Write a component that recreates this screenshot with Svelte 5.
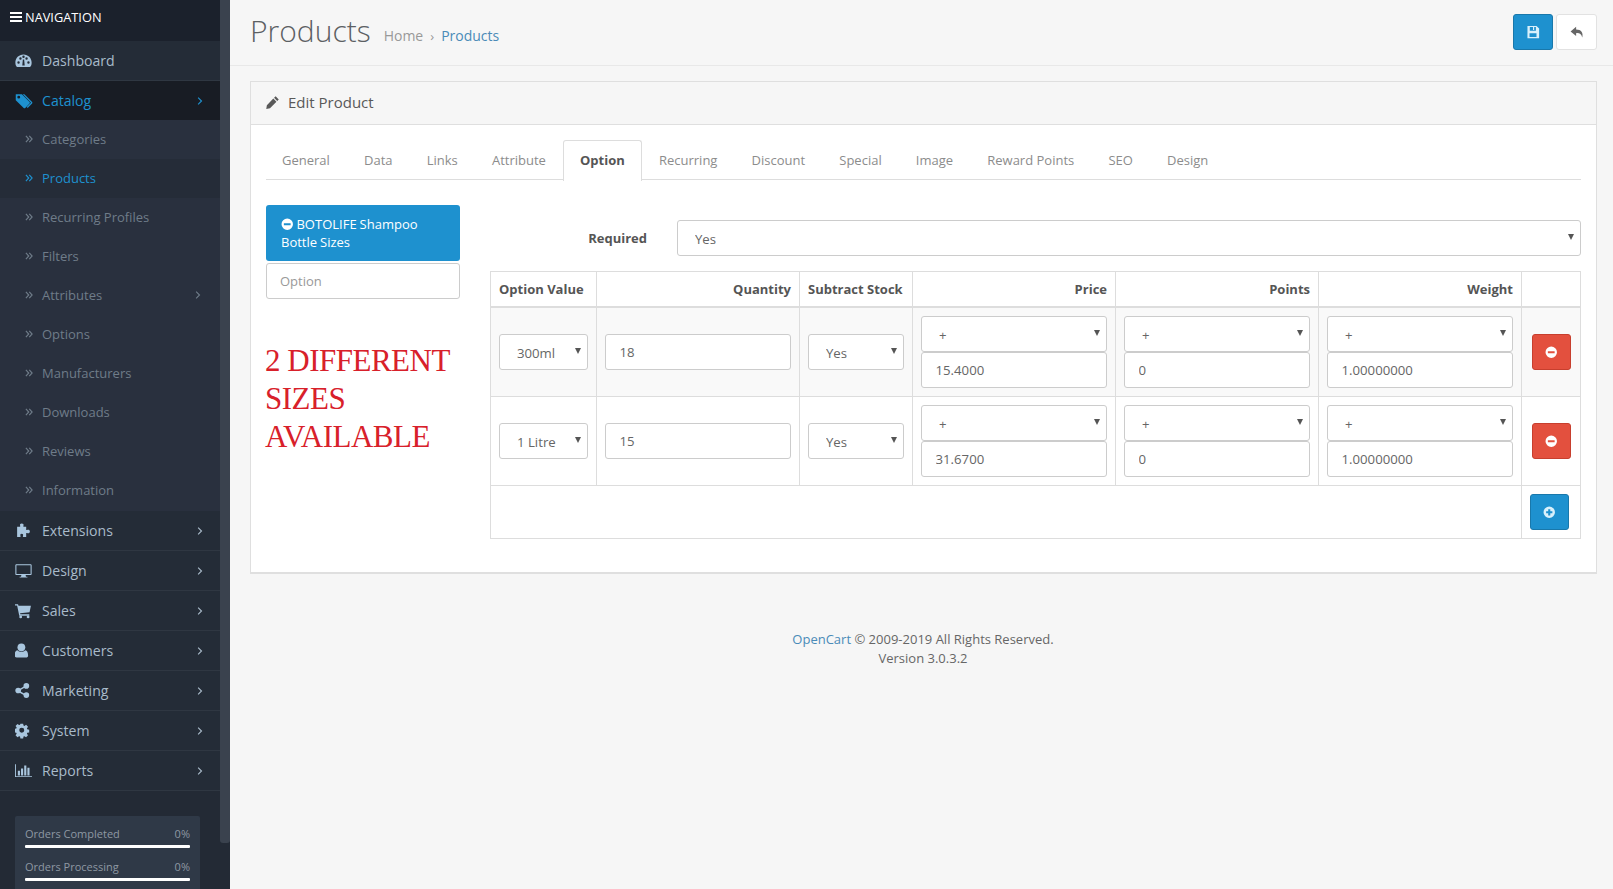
<script>
  const tabs = ['General','Data','Links','Attribute','Option','Recurring','Discount','Special','Image','Reward Points','SEO','Design'];
  const subs = [
    {t:'Categories'},{t:'Products',active:true},{t:'Recurring Profiles'},{t:'Filters'},{t:'Attributes',more:true},
    {t:'Options'},{t:'Manufacturers'},{t:'Downloads'},{t:'Reviews'},{t:'Information'}
  ];
  const mains = ['Extensions','Design','Sales','Customers','Marketing','System','Reports'];
  const rows = [
    {value:'300ml',qty:'18',price:'15.4000'},
    {value:'1 Litre',qty:'15',price:'31.6700'}
  ];
</script>

{#snippet icon(name)}
  <svg class="ic" viewBox="0 0 24 24" aria-hidden="true">
    {#if name==='Dashboard'}
      <path fill-rule="evenodd" d="M12 3.500C5.400 3.500 0.500 8.600 0.500 15c0 2.200.6 4 1.600 5.500.2.300.5.500.9.5h18c.4 0 .7-.2.9-.5 1-1.500 1.600-3.300 1.600-5.500C23.500 8.600 18.600 3.500 12 3.500zM5 16.500a1.700 1.700 0 1 1 0-3.400 1.700 1.700 0 0 1 0 3.400zm2.700-5.600a1.700 1.700 0 1 1 0-3.400 1.700 1.700 0 0 1 0 3.400zM12 8.300a1.700 1.700 0 1 1 0-3.400 1.700 1.700 0 0 1 0 3.400zm4.300 2.600a1.700 1.700 0 1 1 0-3.400 1.700 1.700 0 0 1 0 3.400zm2.700 5.600a1.700 1.700 0 1 1 0-3.400 1.700 1.700 0 0 1 0 3.400zM10.300 19l.8-8.500h1.800l.8 8.500z"/>
    {:else if name==='Catalog'}
      <path fill-rule="evenodd" d="M1 3h8.200l10.300 10.300c.6.600.6 1.500 0 2.100l-5.800 5.800c-.6.600-1.500.6-2.100 0L1 10.900zM5 8.800a1.900 1.900 0 1 0 0-3.800 1.900 1.900 0 0 0 0 3.800z"/>
      <path d="M12.500 3l10.300 10.300c.6.600.6 1.500 0 2.100l-5.900 5.900-1.300-1.300 5.700-5.700L10.300 3z"/>
    {:else if name==='Extensions'}
      <path d="M9.500 2c2 0 3 1.200 2.500 2.800-.3.900-.5 1.500.2 1.900H15.800v4.300c.4.700 1 .4 1.900.1 1.700-.5 3.300.4 3.300 2.400s-1.600 2.900-3.300 2.400c-.9-.3-1.500-.6-1.900.1V21H11.500c-.7-.4-.4-1-.1-1.900.5-1.600-.4-2.600-1.900-2.600s-2.400 1-1.900 2.600c.3.900.6 1.500-.1 1.900H3V6.700h4c.7-.4.500-1 .2-1.900C6.700 3.200 7.500 2 9.500 2z"/>
    {:else if name==='Design'}
      <path fill-rule="evenodd" d="M2 3h20c.8 0 1.500.7 1.500 1.500v12.500c0 .8-.7 1.500-1.500 1.500h-7l.5 2.200h2V22H6.500v-1.300h2L9 18.500H2c-.8 0-1.500-.7-1.500-1.500V4.500C.5 3.700 1.200 3 2 3zm0 1.600v12.300h20V4.600z"/>
    {:else if name==='Sales'}
      <path d="M0 3h4.300l.6 2.200H22.500l-2 9.300-13.300 1.500.3 1.300h12.700v2H6L3 5H0z"/><circle cx="8" cy="21" r="2"/><circle cx="18.500" cy="21" r="2"/>
    {:else if name==='Customers'}
      <circle cx="9" cy="7.500" r="5.500"/><path d="M3.500 11.500c1.300 1.400 3.300 2.300 5.500 2.300s4.200-.9 5.500-2.300c2.600.3 4 3 4 7.500 0 2-1.200 3-3 3H2.500c-1.800 0-3-1-3-3 0-4.500 1.400-7.200 4-7.500z"/>
    {:else if name==='Marketing'}
      <circle cx="4.500" cy="12" r="4"/><circle cx="16" cy="5.500" r="4"/><circle cx="16" cy="18.500" r="4"/><path d="M4.500 11l11-6.500 1 1.900-10.500 6 10.500 5.800-1 2-11.500-6.500z"/>
    {:else if name==='System'}
      <path fill-rule="evenodd" transform="translate(-1 1) scale(.88)" d="M9.800 1.500h4.400l.6 3.100 1.500.6 2.600-1.800 3.100 3.100-1.800 2.600.6 1.500 3.100.6v4.400l-3.100.6-.6 1.500 1.800 2.600-3.100 3.100-2.600-1.800-1.500.6-.6 3.100H9.800l-.6-3.100-1.500-.6-2.600 1.800-3.100-3.100 1.800-2.600-.6-1.500-3.100-.6V9.800l3.100-.6.6-1.500-1.800-2.600 3.100-3.100 2.600 1.800 1.500-.6zM12 8a4 4 0 1 0 0 8 4 4 0 0 0 0-8z"/>
    {:else if name==='Reports'}
      <path d="M0 3h1.300v17H24v1.300H0z"/><path d="M4 12.500h3V19H4zM8.500 9h3v10h-3zM13 5h3v14h-3zM17.500 8h3v11h-3z"/>
    {/if}
  </svg>
{/snippet}

{#snippet circ(plus)}
  <svg class="circ" viewBox="0 0 24 24" aria-hidden="true">
    <path fill-rule="evenodd" d={plus
      ? 'M12 1a11 11 0 1 0 0 22 11 11 0 0 0 0-22zM10 6h4v4h4v4h-4v4h-4v-4H6v-4h4z'
      : 'M12 1a11 11 0 1 0 0 22 11 11 0 0 0 0-22zM5.500 10h13v4h-13z'}/>
  </svg>
{/snippet}

{#snippet chev(cls)}
  <svg class={cls} viewBox="0 0 8 12" aria-hidden="true"><path d="M1.500 1.500 6 6l-4.500 4.500" fill="none" stroke="currentColor" stroke-width="1.500"/></svg>
{/snippet}

{#snippet sel(v)}
  <span class="sel"><select><option>{v}</option></select></span>
{/snippet}

<div class="page">
  <aside class="side">
    <nav class="nav">
      <div class="head">
        <svg class="bars" viewBox="0 0 12 10" aria-hidden="true"><path d="M0 0h12v2H0zM0 4h12v2H0zM0 8h12v2H0z"/></svg>
        <span>NAVIGATION</span>
      </div>
      <div class="main"><span class="icw">{@render icon('Dashboard')}</span><span>Dashboard</span></div>
      <div class="main open"><span class="icw">{@render icon('Catalog')}</span><span>Catalog</span>{@render chev('ch')}</div>
      <div class="subs">
        {#each subs as s}
          <div class="sub" class:on={s.active}>
            <svg class="dbl" viewBox="0 0 9 9" aria-hidden="true"><path d="M1 1l3.200 3.500L1 8M4.800 1 8 4.500 4.800 8" fill="none" stroke="currentColor" stroke-width="1.300"/></svg>
            <span>{s.t}</span>
            {#if s.more}{@render chev('ch')}{/if}
          </div>
        {/each}
      </div>
      {#each mains as m}
        <div class="main"><span class="icw">{@render icon(m)}</span><span>{m}</span>{@render chev('ch')}</div>
      {/each}
      <div class="stats">
        <div class="st"><div class="lab"><span>Orders Completed</span><span>0%</span></div><div class="bar"></div></div>
        <div class="st"><div class="lab"><span>Orders Processing</span><span>0%</span></div><div class="bar"></div></div>
      </div>
    </nav>
    <div class="track"><div class="thumb"></div></div>
  </aside>

  <main class="content">
    <header class="ph">
      <div class="crumbs">
        <h1>Products</h1>
        <a class="home" href="#a">Home</a>
        <span class="gt">›</span>
        <a class="cur" href="#b">Products</a>
      </div>
      <div class="acts">
        <button class="btn blue" aria-label="Save">
          <svg viewBox="0 0 24 24" class="bi"><path fill-rule="evenodd" d="M2.500 1.500H18l4.500 4.500v16.500h-20zM6.500 3.500v6.500h10.500V3.500h-3v5h-2v-5zM6 14v6.500h12V14z"/></svg>
        </button>
        <button class="btn ghost" aria-label="Back">
          <svg viewBox="0 0 24 24" class="bi"><path d="M10.500 3 1 11l9.500 8v-5c6-.5 8.500 1 10.500 7.500 2-8.500-1.500-14-10.500-14z"/></svg>
        </button>
      </div>
    </header>

    <section class="panel">
      <div class="phead">
        <svg viewBox="0 0 24 24" class="pen"><path d="M17 2l5 5-2.500 2.500-5-5zM13.300 5.700l5 5L8 21l-6 1.500L3 16.500z"/></svg>
        <span>Edit Product</span>
      </div>
      <div class="pbody">
        <ul class="tabs">
          {#each tabs as t}
            <li class:act={t==='Option'}>{t}</li>
          {/each}
        </ul>
        <div class="cols">
          <div class="left">
            <div class="pill">{@render circ(false)} BOTOLIFE Shampoo Bottle Sizes</div>
            <input class="opt" placeholder="Option" />
            <p class="red">2 DIFFERENT SIZES AVAILABLE</p>
          </div>
          <div class="right">
            <div class="req">
              <label for="rq">Required</label>
              <span class="sel wide"><select id="rq"><option>Yes</option></select></span>
            </div>
            <table>
              <thead>
                <tr>
                  <th class="l">Option Value</th><th>Quantity</th><th class="l">Subtract Stock</th><th>Price</th><th>Points</th><th>Weight</th><th></th>
                </tr>
              </thead>
              <tbody>
                {#each rows as r, i}
                  <tr class:alt={i===0}>
                    <td>{@render sel(r.value)}</td>
                    <td><input class="inp" value={r.qty} /></td>
                    <td>{@render sel('Yes')}</td>
                    <td>{@render sel('+')}<input class="inp" value={r.price} /></td>
                    <td>{@render sel('+')}<input class="inp" value="0" /></td>
                    <td>{@render sel('+')}<input class="inp" value="1.00000000" /></td>
                    <td class="c"><button class="btn redb" aria-label="Remove">{@render circ(false)}</button></td>
                  </tr>
                {/each}
                <tr class="add">
                  <td colspan="6"></td>
                  <td><button class="btn blue" aria-label="Add">{@render circ(true)}</button></td>
                </tr>
              </tbody>
            </table>
          </div>
        </div>
      </div>
    </section>

    <footer class="foot">
      <a href="#c">OpenCart</a> © 2009-2019 All Rights Reserved.<br />Version 3.0.3.2
    </footer>
  </main>
</div>

<style>
  :global(body) { margin: 0; overflow: hidden; background: #f6f6f6; }
  .page { display: flex; height: 889px; overflow: hidden; font-family: "Open Sans", sans-serif; font-size: 13px; color: #666; background: #f6f6f6; }
  .side { flex: 0 0 230px; display: flex; height: 889px; overflow: hidden; background: #232a35; }
  .nav { width: 220px; flex: none; }
  .head { height: 41px; box-sizing: border-box; background: #1b212c; color: #fff; display: flex; align-items: center; padding: 0 0 7px 10px; font-size: 12.800px; gap: 3px; }
  .bars { width: 12px; height: 10px; fill: #fff; }
  .main { height: 40px; box-sizing: border-box; display: flex; align-items: center; padding: 0 15px; border-bottom: 1px solid #2f3742; color: #a9bbca; font-size: 14.100px; background: #242c37; }
  .main .ch { margin-left: auto; }
  .main.open { background: #181c24; color: #1e91cf; border-bottom-color: #181c24; }
  .icw { width: 27px; flex: none; display: flex; }
  .ic { width: 17px; height: 17px; fill: #a9c6de; }
  .open .ic { fill: #1e91cf; width: 18px; height: 18px; }
  .ch { width: 6px; height: 10px; color: #a9bbca; flex: none; margin-right: 2px; }
  .open .ch { color: #1e91cf; }
  .subs { background: #29303e; margin-top: -1px; padding-bottom: 1px; }
  .sub { height: 39px; box-sizing: border-box; padding: 0 17px 2px 25px; display: flex; align-items: center; color: #6f7c89; font-size: 13px; }
  .sub .ch { margin-left: auto; color: #6f7c89; }
  .sub.on { background: #252c38; color: #1e91cf; }
  .dbl { width: 8px; height: 8px; margin-right: 9px; flex: none; }
  .stats { margin: 25px 20px 0 15px; background: #2f3947; border-radius: 2px; padding: 9px 10px 0; height: 100px; }
  .st { margin-bottom: 10px; }
  .lab { display: flex; justify-content: space-between; font-size: 11px; color: #8e98a3; line-height: 18px; }
  .bar { height: 3px; background: #fff; margin-top: 2px; border-radius: 1px; }
  .track { width: 10px; flex: none; background: #232a35; }
  .thumb { height: 843px; background: #3a424e; border-radius: 0 0 3px 3px; }

  .content { flex: 1; min-width: 0; }
  .ph { height: 66px; box-sizing: border-box; border-bottom: 1px solid #e8e8e8; display: flex; justify-content: space-between; align-items: flex-start; padding: 14px 16px 0 20px; }
  .crumbs { display: flex; align-items: baseline; margin-top: -1px; }
  h1 { margin: 0 13px 0 0; font-size: 30px; font-weight: 300; color: #5c6063; line-height: 36px; }
  .home { color: #999; font-size: 14px; text-decoration: none; position: relative; top: -1px; }
  .gt { color: #999; margin: 0 7px; font-size: 13px; position: relative; top: -1px; }
  .cur { color: #4a8bb8; font-size: 14px; text-decoration: none; position: relative; top: -1px; }
  .acts { display: flex; gap: 3px; }
  .btn { box-sizing: border-box; border-radius: 3px; border: 1px solid; display: inline-flex; align-items: center; justify-content: center; padding: 0; width: 39px; height: 36px; }
  .acts .btn { width: 40px; }
  .acts .ghost { width: 41px; }
  .blue { background: #1e91cf; border-color: #1978ab; }
  .blue .bi, .blue .circ { fill: #d9f0fb; }
  .ghost { background: #fff; border-color: #e2e2e2; }
  .ghost .bi { fill: #666; }
  .bi { width: 14px; height: 14px; }
  .circ { width: 12.500px; height: 12.500px; fill: #fff; }
  .redb { background: #e3503e; border-color: #c73f2e; margin-left: 2px; }

  .panel { margin: 15px 16px 0 20px; border: 1px solid #dfdfdf; border-bottom-width: 2px; background: #fff; height: 493px; box-sizing: border-box; }
  .phead { height: 43px; box-sizing: border-box; background: #f6f6f6; border-bottom: 1px solid #dfdfdf; display: flex; align-items: center; padding: 0 15px 3px 14px; color: #595959; font-size: 15px; gap: 8px; }
  .pen { width: 15px; height: 15px; fill: #595959; margin-top: 2px; }
  .pbody { padding: 15px 15px 0; }
  .tabs { list-style: none; margin: 0; padding: 0; display: flex; border-bottom: 1px solid #ddd; height: 39px; }
  .tabs li { padding: 0 16.080px; line-height: 38px; color: #8c8c8c; font-size: 13px; border: 1px solid transparent; border-bottom: 0; height: 39px; border-radius: 3px 3px 0 0; }
  .tabs li:first-child { padding-left: 15px; }
  .tabs li.act { font-weight: 700; color: #555; background: #fff; border-color: #ddd; height: 40px; }
  .cols { display: flex; margin-top: 25px; }
  .left { width: 194px; flex: none; }
  .pill { box-sizing: border-box; background: #1e91cf; color: #fff; border-radius: 3px; height: 56px; padding: 10px 15px; font-size: 13px; line-height: 18px; word-spacing: -0.4px; }
  .pill .circ { vertical-align: -1px; }
  .opt { display: block; margin-top: 2px; box-sizing: border-box; width: 100%; height: 36px; border: 1px solid #ccc; border-radius: 3px; padding: 0 13px; font: 13px "Open Sans", sans-serif; }
  .opt::placeholder { color: #999; }
  .red { margin: 43px 0 0 -1px; font-family: "Liberation Serif", serif; color: #d8202a; font-size: 31px; letter-spacing: -0.5px; line-height: 38px; }
  .right { margin-left: 30px; flex: 1; min-width: 0; }
  .req { display: flex; align-items: center; height: 36px; margin-top: 15px; }
  .req label { width: 157px; text-align: right; font-weight: 700; font-size: 13px; color: #555; flex: none; }
  .wide { margin-left: 30px; flex: 1; }
  .sel { display: block; position: relative; }
  .sel select { appearance: none; display: block; width: 100%; height: 36px; box-sizing: border-box; background: #fff; border: 1px solid #ccc; border-radius: 3px; padding: 2px 17px 0; font: 13.200px "Open Sans", sans-serif; color: #666; }
  .sel::after { content: ""; position: absolute; right: 7px; top: 14px; border: 3.500px solid transparent; border-top: 6px solid #555; border-bottom: 0; pointer-events: none; }

  table { border-collapse: collapse; margin-top: 15px; width: 1090px; table-layout: fixed; font-size: 13.200px; }
  th, td { border: 1px solid #ddd; padding: 8px; box-sizing: border-box; }
  th { text-align: right; font-weight: 700; color: #555; font-size: 13px; height: 35px; border-bottom-width: 2px; }
  th.l { text-align: left; }
  th:nth-child(1) { width: 106px; } th:nth-child(2) { width: 203px; } th:nth-child(3) { width: 113px; }
  th:nth-child(4), th:nth-child(5), th:nth-child(6) { width: 203px; } th:nth-child(7) { width: 59px; }
  tbody tr:not(.add) td { height: 89px; }
  tr.alt td { background: #f9f9f9; }
  .inp { display: block; width: 100%; height: 36px; box-sizing: border-box; border: 1px solid #ccc; border-radius: 3px; padding: 0 13.500px; font: 13.200px "Open Sans", sans-serif; color: #666; background: #fff; }
  .add td { height: 53px; }
  .foot { text-align: center; margin-top: 56px; padding-left: 3px; line-height: 18.500px; color: #666; font-size: 13px; }
  .foot a { color: #4a8bb8; text-decoration: none; }
</style>
